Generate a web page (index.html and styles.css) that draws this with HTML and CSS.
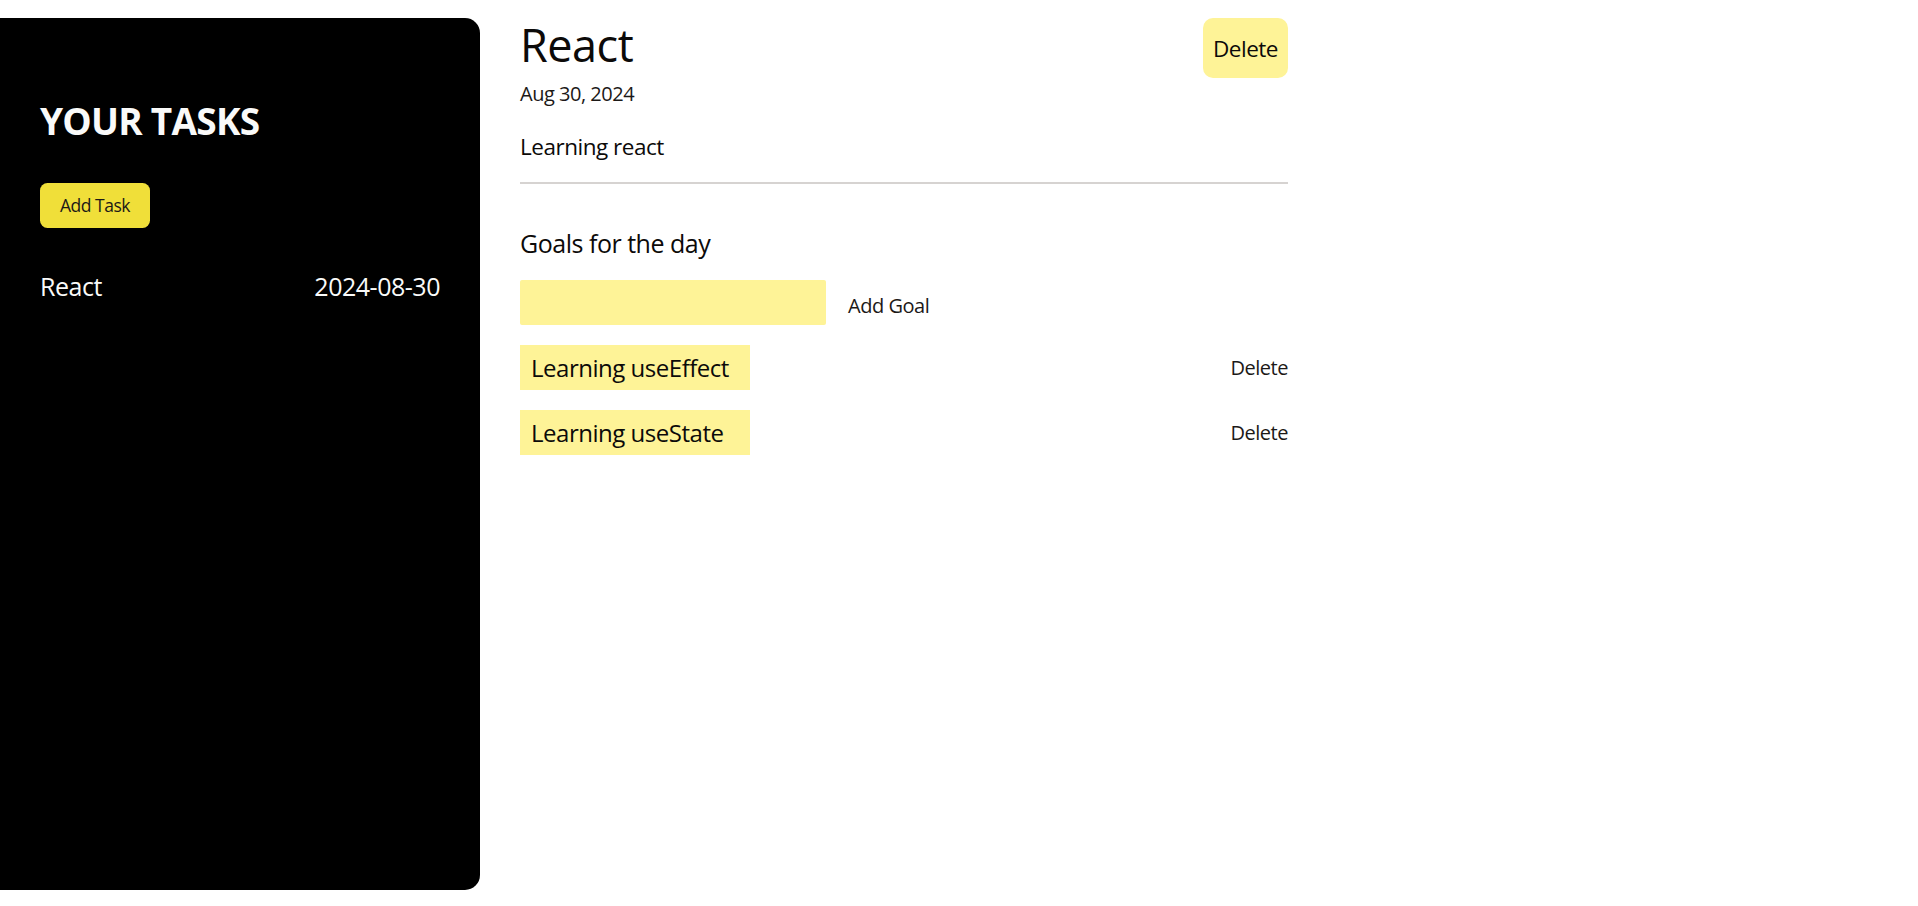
FILE: index.html
```html
<!DOCTYPE html>
<html lang="en">
<head>
<meta charset="utf-8">
<title>Tasks</title>
<link rel="stylesheet" href="styles.css">
</head>
<body>
<div class="app">
  <aside class="sidebar">
    <h2 class="sidebar-title">YOUR TASKS</h2>
    <button class="add-task">Add Task</button>
    <ul class="task-list">
      <li class="task-item"><span>React</span><span>2024-08-30</span></li>
    </ul>
  </aside>
  <main class="detail">
    <header class="detail-head">
      <div>
        <h1 class="detail-title">React</h1>
        <p class="detail-date">Aug 30, 2024</p>
      </div>
      <button class="delete-task">Delete</button>
    </header>
    <p class="detail-desc">Learning react</p>
    <hr class="divider">
    <section class="goals">
      <h2 class="goals-title">Goals for the day</h2>
      <div class="goal-form">
        <input class="goal-input" type="text">
        <button class="add-goal">Add Goal</button>
      </div>
      <ul class="goal-list">
        <li class="goal-row"><span class="goal-text">Learning useEffect</span><button class="goal-delete">Delete</button></li>
        <li class="goal-row"><span class="goal-text">Learning useState</span><button class="goal-delete">Delete</button></li>
      </ul>
    </section>
  </main>
</div>
</body>
</html>
```

FILE: styles.css
```css
* { box-sizing: border-box; }

body {
  margin: 0;
  font-family: "Open Sans", "Noto Sans", sans-serif;
  letter-spacing: -0.03em;
  color: #0c0a09;
  background: #fff;
}

.app {
  display: flex;
  gap: 40px;
  margin-top: 18px;
  height: 872px;
}

.sidebar {
  width: 480px;
  flex: none;
  background: #000;
  color: #fafaf9;
  padding: 80px 40px 0;
  border-radius: 0 15px 15px 0;
}

.sidebar-title {
  margin: 0;
  font-size: 37px;
  line-height: 45px;
  font-weight: 700;
  letter-spacing: -0.02em;
}

.add-task {
  margin-top: 40px;
  font-family: inherit;
  letter-spacing: inherit;
  font-size: 17.5px;
  line-height: 25px;
  padding: 10px 20px;
  border: 0;
  border-radius: 7.5px;
  background: #f0df39;
  color: #1c1917;
}

.task-list {
  list-style: none;
  margin: 41px 0 0;
  padding: 0;
}

.task-item {
  display: flex;
  justify-content: space-between;
  font-size: 25px;
  line-height: 35px;
}

.detail {
  width: 768px;
}

.detail-head {
  display: flex;
  justify-content: space-between;
  align-items: flex-start;
}

.detail-title {
  margin: 0;
  font-size: 45px;
  line-height: 53px;
  font-weight: 400;
}

.detail-date {
  margin: 9px 0 0;
  font-size: 20px;
  line-height: 28px;
  color: #1c1917;
}

.delete-task {
  font-family: inherit;
  letter-spacing: inherit;
  font-size: 22.5px;
  line-height: 35px;
  padding: 12.5px 10px;
  border: 0;
  border-radius: 10px;
  background: #fef397;
  color: #0c0a09;
}

.detail-desc {
  margin: 23px 0 0;
  font-size: 22.5px;
  line-height: 32px;
}

.divider {
  margin: 19px 0 0;
  border: 0;
  height: 2px;
  background: #d6d3d1;
}

.goals-title {
  margin: 42px 0 0;
  font-size: 25px;
  line-height: 35px;
  font-weight: 400;
}

.goal-form {
  margin-top: 19px;
  display: flex;
  align-items: center;
}

.goal-input {
  width: 306px;
  height: 45px;
  border: 0;
  border-radius: 2px;
  background: #fef397;
  font-family: inherit;
  font-size: 20px;
  padding: 0 10px;
}

.add-goal {
  margin-left: 22px;
  padding: 6px 0 0;
  border: 0;
  background: none;
  font-family: inherit;
  letter-spacing: inherit;
  font-size: 20px;
  line-height: 28px;
  color: #1c1917;
}

.goal-list {
  list-style: none;
  margin: 20px 0 0;
  padding: 0;
  display: flex;
  flex-direction: column;
  gap: 20px;
}

.goal-row {
  display: flex;
  justify-content: space-between;
  align-items: center;
}

.goal-text {
  width: 230px;
  padding-left: 11px;
  font-size: 24px;
  line-height: 45px;
  background: #fef397;
  white-space: nowrap;
}

.goal-delete {
  padding: 0;
  border: 0;
  background: none;
  font-family: inherit;
  letter-spacing: inherit;
  font-size: 20px;
  line-height: 28px;
  color: #1c1917;
}
```
